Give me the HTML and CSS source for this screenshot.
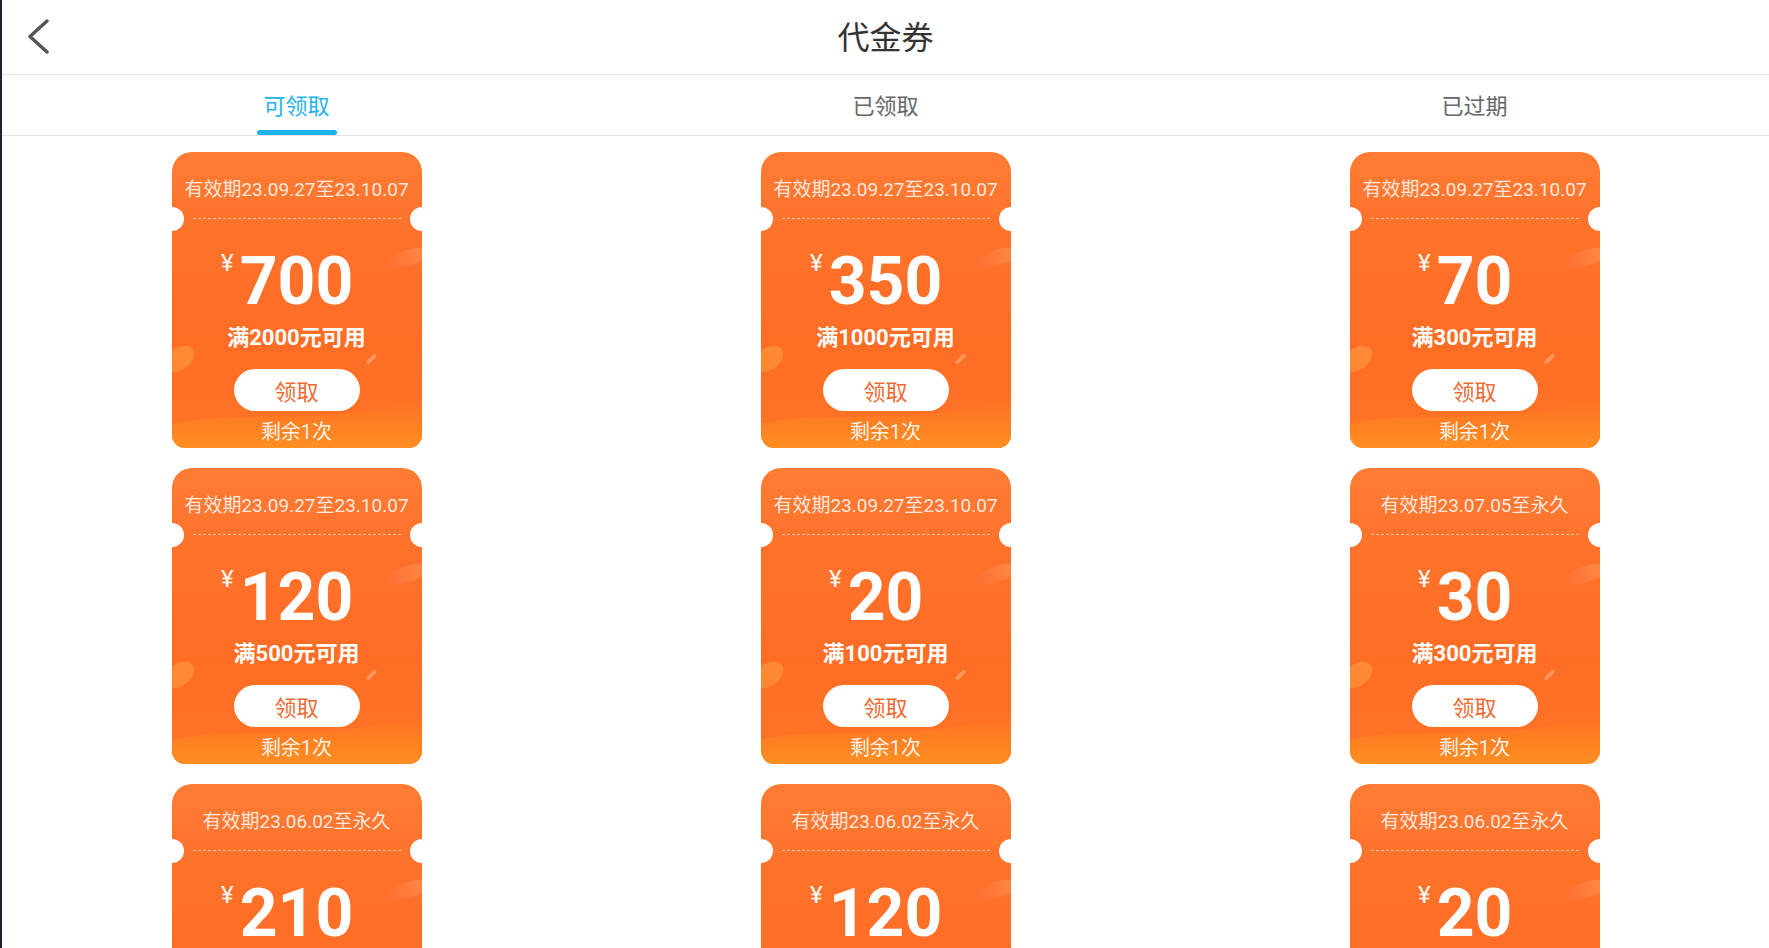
FILE: index.html
```html
<!DOCTYPE html>
<html lang="zh-CN">
<head>
<meta charset="utf-8">
<title>代金券</title>
<link rel="stylesheet" href="styles.css">
</head>
<body>
<div class="app">
  <header class="topbar">
    <button class="back" aria-label="返回">
      <svg width="24" height="36" viewBox="0 0 24 36"><polyline points="20,2 3,17.5 20,33" fill="none" stroke="#555" stroke-width="3.4" stroke-linecap="round" stroke-linejoin="round"/></svg>
    </button>
    <h1 class="title">代金券</h1>
  </header>
  <nav class="tabs">
    <div class="tab active">可领取<span class="bar"></span></div>
    <div class="tab">已领取</div>
    <div class="tab">已过期</div>
  </nav>
  <main class="list">
    <div class="cell"><div class="card">
      <div class="deco"><svg class="wave" viewBox="0 0 250 60" preserveAspectRatio="none"><defs><linearGradient id="w1" x1="0" y1="0" x2="0" y2="1"><stop offset="0" stop-color="#ff8a22" stop-opacity="0"/><stop offset="0.45" stop-color="#ff8a20" stop-opacity="0.55"/><stop offset="1" stop-color="#ff9122" stop-opacity="0.95"/></linearGradient></defs><path d="M0 36 C 50 24, 110 32, 170 26 C 205 22, 230 16, 250 14 L250 60 L0 60 Z" fill="url(#w1)"/></svg><span class="blob-r"></span><span class="blob-l"></span><span class="streak"></span></div>
      <div class="date">有效期23.09.27至23.10.07</div>
      <div class="dash"></div>
      <div class="amount"><span class="yen">¥</span>700</div>
      <div class="cond">满2000元可用</div>
      <button class="get">领取</button>
      <div class="left">剩余1次</div>
    </div></div>
    <div class="cell"><div class="card">
      <div class="deco"><svg class="wave" viewBox="0 0 250 60" preserveAspectRatio="none"><path d="M0 36 C 50 24, 110 32, 170 26 C 205 22, 230 16, 250 14 L250 60 L0 60 Z" fill="url(#w1)"/></svg><span class="blob-r"></span><span class="blob-l"></span><span class="streak"></span></div>
      <div class="date">有效期23.09.27至23.10.07</div>
      <div class="dash"></div>
      <div class="amount"><span class="yen">¥</span>350</div>
      <div class="cond">满1000元可用</div>
      <button class="get">领取</button>
      <div class="left">剩余1次</div>
    </div></div>
    <div class="cell"><div class="card">
      <div class="deco"><svg class="wave" viewBox="0 0 250 60" preserveAspectRatio="none"><path d="M0 36 C 50 24, 110 32, 170 26 C 205 22, 230 16, 250 14 L250 60 L0 60 Z" fill="url(#w1)"/></svg><span class="blob-r"></span><span class="blob-l"></span><span class="streak"></span></div>
      <div class="date">有效期23.09.27至23.10.07</div>
      <div class="dash"></div>
      <div class="amount"><span class="yen">¥</span>70</div>
      <div class="cond">满300元可用</div>
      <button class="get">领取</button>
      <div class="left">剩余1次</div>
    </div></div>

    <div class="cell"><div class="card">
      <div class="deco"><svg class="wave" viewBox="0 0 250 60" preserveAspectRatio="none"><path d="M0 36 C 50 24, 110 32, 170 26 C 205 22, 230 16, 250 14 L250 60 L0 60 Z" fill="url(#w1)"/></svg><span class="blob-r"></span><span class="blob-l"></span><span class="streak"></span></div>
      <div class="date">有效期23.09.27至23.10.07</div>
      <div class="dash"></div>
      <div class="amount"><span class="yen">¥</span>120</div>
      <div class="cond">满500元可用</div>
      <button class="get">领取</button>
      <div class="left">剩余1次</div>
    </div></div>
    <div class="cell"><div class="card">
      <div class="deco"><svg class="wave" viewBox="0 0 250 60" preserveAspectRatio="none"><path d="M0 36 C 50 24, 110 32, 170 26 C 205 22, 230 16, 250 14 L250 60 L0 60 Z" fill="url(#w1)"/></svg><span class="blob-r"></span><span class="blob-l"></span><span class="streak"></span></div>
      <div class="date">有效期23.09.27至23.10.07</div>
      <div class="dash"></div>
      <div class="amount"><span class="yen">¥</span>20</div>
      <div class="cond">满100元可用</div>
      <button class="get">领取</button>
      <div class="left">剩余1次</div>
    </div></div>
    <div class="cell"><div class="card">
      <div class="deco"><svg class="wave" viewBox="0 0 250 60" preserveAspectRatio="none"><path d="M0 36 C 50 24, 110 32, 170 26 C 205 22, 230 16, 250 14 L250 60 L0 60 Z" fill="url(#w1)"/></svg><span class="blob-r"></span><span class="blob-l"></span><span class="streak"></span></div>
      <div class="date">有效期23.07.05至永久</div>
      <div class="dash"></div>
      <div class="amount"><span class="yen">¥</span>30</div>
      <div class="cond">满300元可用</div>
      <button class="get">领取</button>
      <div class="left">剩余1次</div>
    </div></div>

    <div class="cell"><div class="card">
      <div class="deco"><svg class="wave" viewBox="0 0 250 60" preserveAspectRatio="none"><path d="M0 36 C 50 24, 110 32, 170 26 C 205 22, 230 16, 250 14 L250 60 L0 60 Z" fill="url(#w1)"/></svg><span class="blob-r"></span><span class="blob-l"></span><span class="streak"></span></div>
      <div class="date">有效期23.06.02至永久</div>
      <div class="dash"></div>
      <div class="amount"><span class="yen">¥</span>210</div>
      <div class="cond">满1000元可用</div>
      <button class="get">领取</button>
      <div class="left">剩余1次</div>
    </div></div>
    <div class="cell"><div class="card">
      <div class="deco"><svg class="wave" viewBox="0 0 250 60" preserveAspectRatio="none"><path d="M0 36 C 50 24, 110 32, 170 26 C 205 22, 230 16, 250 14 L250 60 L0 60 Z" fill="url(#w1)"/></svg><span class="blob-r"></span><span class="blob-l"></span><span class="streak"></span></div>
      <div class="date">有效期23.06.02至永久</div>
      <div class="dash"></div>
      <div class="amount"><span class="yen">¥</span>120</div>
      <div class="cond">满500元可用</div>
      <button class="get">领取</button>
      <div class="left">剩余1次</div>
    </div></div>
    <div class="cell"><div class="card">
      <div class="deco"><svg class="wave" viewBox="0 0 250 60" preserveAspectRatio="none"><path d="M0 36 C 50 24, 110 32, 170 26 C 205 22, 230 16, 250 14 L250 60 L0 60 Z" fill="url(#w1)"/></svg><span class="blob-r"></span><span class="blob-l"></span><span class="streak"></span></div>
      <div class="date">有效期23.06.02至永久</div>
      <div class="dash"></div>
      <div class="amount"><span class="yen">¥</span>20</div>
      <div class="cond">满100元可用</div>
      <button class="get">领取</button>
      <div class="left">剩余1次</div>
    </div></div>
  </main>
</div>
</body>
</html>
```
FILE: styles.css
```css
html, body {
  margin: 0;
  padding: 0;
  height: 100%;
  overflow: hidden;
  background: #fff;
}
body {
  font-family: Roboto, "Noto Sans CJK SC", "Noto Sans", sans-serif;
}
.app {
  height: 100vh;
  border-left: 2px solid #1d2036;
  box-sizing: border-box;
  display: flex;
  flex-direction: column;
  overflow: hidden;
}
.topbar {
  height: 74px;
  flex: none;
  display: flex;
  align-items: center;
  justify-content: center;
  position: relative;
  border-bottom: 1px solid #e4e4e4;
}
.back {
  position: absolute;
  left: 25px;
  top: 19px;
  width: 26px;
  height: 36px;
  padding: 0;
  border: 0;
  background: none;
  display: flex;
}
.title {
  margin: 0 0 5px;
  font-size: 32px;
  font-weight: 400;
  color: #333;
  line-height: 40px;
  font-family: "Noto Sans CJK SC", sans-serif;
}
.tabs {
  flex: none;
  height: 60px;
  display: grid;
  grid-template-columns: repeat(3, 1fr);
  border-bottom: 1px solid #e4e4e4;
}
.tab {
  position: relative;
  display: flex;
  align-items: center;
  justify-content: center;
  font-size: 22px;
  color: #666;
  font-family: "Noto Sans CJK SC", sans-serif;
  padding-bottom: 2px;
}
.tab.active {
  color: #25b3ec;
}
.tab .bar {
  position: absolute;
  bottom: 0;
  left: 50%;
  width: 80px;
  height: 5px;
  margin-left: -40px;
  border-radius: 3px;
  background: #1eb2ef;
}
.list {
  display: grid;
  grid-template-columns: repeat(3, 1fr);
  row-gap: 20px;
  padding-top: 16px;
}
.cell {
  display: flex;
  justify-content: center;
}
.card {
  position: relative;
  width: 250px;
  height: 296px;
  border-radius: 20px 20px 13px 13px;
  overflow: hidden;
  background: linear-gradient(180deg, #ff7c35 0%, #ff7129 30%, #ff6d25 65%, #ff7425 100%);
  display: flex;
  flex-direction: column;
  align-items: center;
  color: #fff;
}
.card::before,
.card::after {
  content: "";
  position: absolute;
  top: 55px;
  width: 24px;
  height: 24px;
  border-radius: 50%;
  background: #fff;
  z-index: 2;
}
.card::before { left: -12px; }
.card::after { right: -12px; }
.deco {
  position: absolute;
  inset: 0;
  pointer-events: none;
}
.wave {
  position: absolute;
  left: 0;
  bottom: 0;
  width: 250px;
  height: 60px;
}
.blob-r {
  position: absolute;
  left: 214px;
  top: 98px;
  width: 44px;
  height: 16px;
  border-radius: 50%;
  transform: rotate(-18deg);
  background: linear-gradient(90deg, rgba(255,110,60,0.5), #ff8a46);
}
.blob-l {
  position: absolute;
  left: -10px;
  top: 196px;
  width: 34px;
  height: 22px;
  border-radius: 50%;
  transform: rotate(-35deg);
  background: linear-gradient(90deg, #ff8a34, #ff9038);
  opacity: 0.85;
}
.streak {
  position: absolute;
  left: 193px;
  top: 205px;
  width: 13px;
  height: 4px;
  border-radius: 2px;
  transform: rotate(-45deg);
  background: rgba(255, 190, 150, 0.5);
}
.date {
  position: relative;
  margin-top: 26px;
  font-size: 19px;
  line-height: 24px;
  color: rgba(255, 255, 255, 0.85);
  white-space: nowrap;
}
.dash {
  position: relative;
  align-self: stretch;
  margin: 16px 21px 0;
  border-top: 1px dashed rgba(255, 255, 255, 0.6);
}
.amount {
  position: relative;
  margin-top: 30px;
  font-size: 66px;
  line-height: 66px;
  font-weight: 700;
  height: 66px;
}
.yen {
  position: absolute;
  right: calc(100% + 6px);
  top: 2px;
  font-size: 24px;
  line-height: 24px;
  font-weight: 400;
}
.cond {
  position: relative;
  margin-top: 8px;
  font-size: 22px;
  line-height: 30px;
  font-weight: 700;
}
.get {
  position: relative;
  margin-top: 16px;
  width: 126px;
  height: 42px;
  border: 0;
  border-radius: 21px;
  background: #fff;
  color: #f26a33;
  font-family: "Noto Sans CJK SC", sans-serif;
  font-size: 22px;
  line-height: 42px;
  padding: 0;
}
.left {
  position: relative;
  margin-top: 9px;
  font-size: 20px;
  line-height: 24px;
  color: rgba(255, 255, 255, 0.92);
}
```
